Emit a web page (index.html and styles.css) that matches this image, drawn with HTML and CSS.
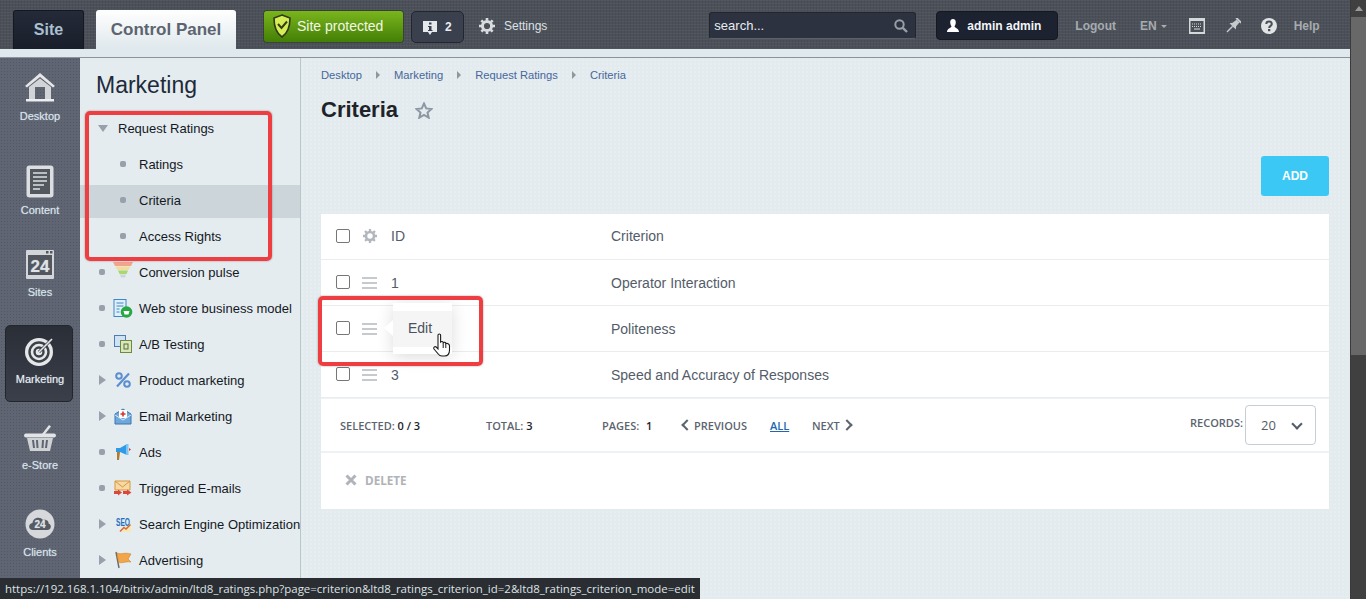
FILE: index.html
```html
<!DOCTYPE html>
<html lang="en">
<head>
    <meta charset="UTF-8">
    <title>Criteria</title>
    <link rel="stylesheet" href="styles.css">
</head>
<body>
<div class="app">
    <header class="topbar">
        <a class="tab tab-site">Site</a>
        <a class="tab tab-panel">Control Panel</a>
        <a class="protected">
            <svg width="20" height="24" viewBox="0 0 20 24"><path d="M10 1 L18 4 C18 13 16 19 10 23 C4 19 2 13 2 4 Z" fill="#d6ee55" stroke="#2f3a18" stroke-width="1.6"/><path d="M6 10 L9.5 14 L15 7.5" fill="none" stroke="#33401a" stroke-width="2"/></svg>
            <span>Site protected</span>
        </a>
        <a class="notify">
            <svg width="14" height="15" viewBox="0 0 14 15"><path d="M0 1 H14 V12 H9 L7 15 L5 12 H0 Z" fill="#e6e9ec"/><rect x="6" y="2.500" width="2.500" height="2" fill="#3a404d"/><path d="M5 6 H8.500 V10 H9.500 V11 H5 V10 H6 V7 H5 Z" fill="#3a404d"/></svg>
            <b>2</b>
        </a>
        <a class="settings">
            <svg width="16" height="16" viewBox="0 0 16 16"><circle cx="8" cy="8" r="4.600" fill="none" stroke="#d9dcdf" stroke-width="3"/><path d="M8 0 V16 M0 8 H16 M2.300 2.300 L13.700 13.700 M13.700 2.300 L2.300 13.700" stroke="#d9dcdf" stroke-width="2.600" stroke-dasharray="2.600 10.800 2.600"/></svg>
            <span>Settings</span>
        </a>
        <div class="search">
            <span>search...</span>
            <svg width="14" height="14" viewBox="0 0 14 14"><circle cx="5.500" cy="5.500" r="4.200" fill="none" stroke="#9a9fa6" stroke-width="2"/><path d="M8.800 8.800 L13 13" stroke="#9a9fa6" stroke-width="2.400"/></svg>
        </div>
        <a class="user">
            <svg width="12" height="13" viewBox="0 0 12 13"><path d="M6 0 C8 0 8.800 1.500 8.800 3.500 C8.800 5.500 7.800 6.800 7.500 7.500 C8 9 12 9.500 12 13 H0 C0 9.500 4 9 4.500 7.500 C4.200 6.800 3.200 5.500 3.200 3.500 C3.200 1.500 4 0 6 0 Z" fill="#fff"/></svg>
            <span>admin admin</span>
        </a>
        <a class="top-link logout">Logout</a>
        <a class="top-link lang">EN<i class="lang-arrow"></i></a>
        <svg class="keyboard" width="16" height="16" viewBox="0 0 16 16"><rect width="16" height="16" fill="#d5d8db"/><rect x="1.500" y="3" width="13" height="11" fill="#4b5058"/><path d="M3 6 H13 M3 8.500 H13" stroke="#d5d8db" stroke-dasharray="1 1"/><path d="M5 11 H11" stroke="#d5d8db"/></svg>
        <svg class="pin" width="16" height="16" viewBox="0 0 16 16"><g transform="rotate(45 8 8)" fill="#c6cacd"><rect x="4.500" y="-1" width="7" height="2"/><path d="M6 1 H10 L10.500 6 L12.500 8.500 H3.500 L5.500 6 Z"/><rect x="7.300" y="8.500" width="1.400" height="8"/></g></svg>
        <svg class="help-icon" width="16" height="16" viewBox="0 0 16 16"><circle cx="8" cy="8" r="8" fill="#e2e4e6"/><path d="M5.300 6 C5.300 2.800 10.800 2.800 10.800 6 C10.800 8 8.200 7.800 8.200 10" fill="none" stroke="#4b5058" stroke-width="2"/><rect x="7" y="11" width="2.300" height="2.200" fill="#4b5058"/></svg>
        <a class="top-link help">Help</a>
    </header>
    <div class="strip"></div>

    <div class="main">
        <nav class="rail">
            <a class="rail-item rail-desktop">
                <svg width="32" height="30" viewBox="0 0 32 30"><path d="M16 1 L31 14 L29 15.500 L16 5 L3 15.500 L1 14 Z" fill="#e4e6e8"/><path d="M5 15 L16 6.500 L27 15 V27 H21 V15 H11 V27 H5 Z" fill="#d2d5d8"/><rect x="2" y="27" width="28" height="2.500" fill="#eceef0"/></svg>
                <span>Desktop</span>
            </a>
            <a class="rail-item rail-content">
                <svg width="28" height="33" viewBox="0 0 28 33"><rect x="0.500" y="0.500" width="27" height="32" rx="3" fill="#dcdfe2"/><rect x="4" y="4" width="20" height="25" fill="#53585f"/><path d="M7 8 H21 M7 12 H21 M7 16 H21 M7 20 H18 M7 24 H14" stroke="#dcdfe2" stroke-width="1.600"/></svg>
                <span>Content</span>
            </a>
            <a class="rail-item rail-sites">
                <svg width="28" height="29" viewBox="0 0 28 29"><rect width="28" height="29" rx="1" fill="#d3d6d9"/><rect x="2" y="5" width="24" height="20" fill="#52575f"/><rect x="20" y="1" width="2.500" height="2.500" fill="#52575f"/><rect x="24" y="1" width="2.500" height="2.500" fill="#52575f"/><text x="14" y="22" text-anchor="middle" class="rail-num">24</text></svg>
                <span>Sites</span>
            </a>
            <a class="rail-item rail-active">
                <svg width="30" height="30" viewBox="0 0 30 30"><circle cx="14" cy="16" r="14" fill="#e6e7e9"/><circle cx="14" cy="16" r="9.500" fill="none" stroke="#3c4047" stroke-width="2.400"/><circle cx="14" cy="16" r="4.500" fill="none" stroke="#3c4047" stroke-width="2.400"/><path d="M14 16 L26 4" stroke="#3c4047" stroke-width="3"/><path d="M14 16 L27 3" stroke="#e6e7e9" stroke-width="1.600"/></svg>
                <span>Marketing</span>
            </a>
            <a class="rail-item rail-store">
                <svg width="32" height="28" viewBox="0 0 32 28"><path d="M18 10 L25 1 L27 2.500 L21 10 Z" fill="#e2e4e6"/><rect y="9.500" width="32" height="4" rx="2" fill="#e2e4e6"/><path d="M3 14 H29 L26 27 H6 Z" fill="#cfd2d5"/><path d="M9 16 L10 24 M13 16 L13.500 24 M18.500 24 L19 16 M22 24 L23 16" stroke="#5f6572" stroke-width="2"/></svg>
                <span>e-Store</span>
            </a>
            <a class="rail-item rail-clients">
                <svg width="30" height="30" viewBox="0 0 30 30"><circle cx="15" cy="15" r="14.500" fill="#d6d8db"/><path d="M8 21 C3 21 3 14.500 7.500 14 C8 8.500 15 7 18 11 C22 10 24 13 23.500 14.500 C27 15.500 26.500 21 22 21 Z" fill="#555a63"/><text x="15" y="19" text-anchor="middle" class="rail-cloud">24</text></svg>
                <span>Clients</span>
            </a>
        </nav>

        <aside class="menu">
            <h2 class="menu-title">Marketing</h2>
            <ul class="menu-list">
                <li class="menu-row"><i class="arrow-down"></i><span class="menu-parent">Request Ratings</span></li>
                <li class="menu-row menu-sub"><i class="dot"></i><span>Ratings</span></li>
                <li class="menu-row menu-sub menu-current"><i class="dot"></i><span>Criteria</span></li>
                <li class="menu-row menu-sub"><i class="dot"></i><span>Access Rights</span></li>
                <li class="menu-row">
                    <i class="dot"></i>
                    <svg class="menu-icon menu-icon-up" width="20" height="16" viewBox="0 0 20 16"><path d="M0 0 H20 L18 4 H2 Z" fill="#f0a58e"/><path d="M2.500 4.500 H17.500 L15.500 8 H4.500 Z" fill="#f5dc9a"/><path d="M5 8.500 H15 L13.500 12 H6.500 Z" fill="#a8d86f"/><path d="M7 12.500 H13 L12 15.500 H8 Z" fill="#cfd4d8"/></svg>
                    <span>Conversion pulse</span>
                </li>
                <li class="menu-row">
                    <i class="dot"></i>
                    <svg class="menu-icon" width="19" height="19" viewBox="0 0 19 19"><rect x="0.500" y="0.500" width="12" height="17" fill="#dff0fb" stroke="#3e86c4"/><path d="M3 4 H10 M3 7 H10 M3 10 H6 M3 13 H6" stroke="#3e86c4"/><circle cx="13" cy="13" r="5.800" fill="#28a745"/><path d="M10 12 H16 L15 15.500 H11 Z" fill="#fff"/></svg>
                    <span>Web store business model</span>
                </li>
                <li class="menu-row">
                    <i class="dot"></i>
                    <svg class="menu-icon" width="18" height="18" viewBox="0 0 18 18"><rect x="0.500" y="0.500" width="11" height="11" fill="#cfe3f5" stroke="#4a7fb5"/><rect x="6.500" y="5.500" width="11" height="12" fill="#dbe6c0" stroke="#6c8c3a"/><rect x="10" y="9" width="4" height="5" fill="none" stroke="#53702a"/></svg>
                    <span>A/B Testing</span>
                </li>
                <li class="menu-row">
                    <i class="arrow-right"></i>
                    <svg class="menu-icon" width="16" height="16" viewBox="0 0 16 16"><circle cx="4" cy="4" r="2.800" fill="none" stroke="#5b8fd0" stroke-width="2"/><circle cx="12" cy="12" r="2.800" fill="none" stroke="#5b8fd0" stroke-width="2"/><path d="M2 14.500 L14 1.500" stroke="#5b8fd0" stroke-width="2.200"/></svg>
                    <span>Product marketing</span>
                </li>
                <li class="menu-row">
                    <i class="arrow-right"></i>
                    <svg class="menu-icon" width="16" height="17" viewBox="0 0 16 17"><path d="M0 6 L8 1 L16 6 V16 H0 Z" fill="#6fa8dc" stroke="#3a76b0"/><rect x="4" y="2" width="8" height="8" fill="#fff"/><path d="M8 3.500 V8.500 M5.500 6 H10.500" stroke="#d9342b" stroke-width="1.600"/><path d="M0 7 L8 12 L16 7" fill="none" stroke="#d7e8f7"/></svg>
                    <span>Email Marketing</span>
                </li>
                <li class="menu-row">
                    <i class="dot"></i>
                    <svg class="menu-icon" width="16" height="18" viewBox="0 0 16 18"><path d="M1 5 H5 L12 1 V12 L5 9 H1 Z" fill="#2f9be8"/><rect x="11" y="1" width="2.500" height="11" fill="#7cc4f5"/><path d="M14 5 L16 6.500 L14 8 Z" fill="#d93a2b"/><path d="M2 9 H5 L4 17 H2 Z" fill="#b07b2c"/></svg>
                    <span>Ads</span>
                </li>
                <li class="menu-row">
                    <i class="dot"></i>
                    <svg class="menu-icon" width="18" height="16" viewBox="0 0 18 16"><path d="M1 1 H16 V10 H1 Z" fill="#f6d9a4" stroke="#d8973d"/><path d="M1 1 L8.500 7 L16 1" fill="none" stroke="#d8973d"/><path d="M0 11 H4 V9.500 L8 12.500 L4 15.500 V14 H0 Z M9 11 H13 V9.500 L17.500 12.500 L13 15.500 V14 H9 Z" fill="#d9483b"/></svg>
                    <span>Triggered E-mails</span>
                </li>
                <li class="menu-row">
                    <i class="arrow-right"></i>
                    <svg class="menu-icon" width="16" height="16" viewBox="0 0 16 16"><path d="M6 16 L16 8 V16 Z" fill="#f7e7b5"/><text x="1" y="10" class="seo-text" textLength="14" lengthAdjust="spacingAndGlyphs">SEO</text><path d="M5 15.500 L9 11.500 L11 13 L15.500 8.500" fill="none" stroke="#e0662c" stroke-width="1.500"/></svg>
                    <span>Search Engine Optimization</span>
                </li>
                <li class="menu-row">
                    <i class="arrow-right"></i>
                    <svg class="menu-icon" width="18" height="18" viewBox="0 0 18 18"><path d="M2 1 L5 17" stroke="#6f6a5e" stroke-width="1.400"/><path d="M3 2 C7 4 10 1 17 3 L14 8 L17 11 C11 10 8 13 4.500 11 Z" fill="#f2a54a" stroke="#cf8127" stroke-width="0.600"/></svg>
                    <span>Advertising</span>
                </li>
            </ul>
        </aside>

        <main class="content">
            <div class="crumbs">
                <a>Desktop</a><i class="crumb-arrow"></i>
                <a>Marketing</a><i class="crumb-arrow"></i>
                <a>Request Ratings</a><i class="crumb-arrow"></i>
                <a>Criteria</a>
            </div>
            <div class="title-row">
                <h1>Criteria</h1>
                <svg width="18" height="17" viewBox="0 0 18 17"><path d="M9 1.500 L11.200 6.400 L16.500 7 L12.500 10.500 L13.700 15.700 L9 13 L4.300 15.700 L5.500 10.500 L1.500 7 L6.800 6.400 Z" fill="none" stroke="#8d97a3" stroke-width="2"/></svg>
            </div>
            <div class="toolbar"><a class="add-btn">ADD</a></div>

            <section class="grid-card">
                <div class="grid-row grid-head">
                    <span class="check"></span>
                    <svg class="row-ico" width="14" height="14" viewBox="0 0 16 16"><circle cx="8" cy="8" r="4.600" fill="none" stroke="#b2b7bd" stroke-width="3"/><path d="M8 0 V16 M0 8 H16 M2.300 2.300 L13.700 13.700 M13.700 2.300 L2.300 13.700" stroke="#b2b7bd" stroke-width="2.600" stroke-dasharray="2.600 10.800 2.600"/></svg>
                    <span class="col-id">ID</span>
                    <span>Criterion</span>
                </div>
                <div class="grid-row">
                    <span class="check"></span>
                    <i class="burger"></i>
                    <span class="col-id">1</span>
                    <span>Operator Interaction</span>
                </div>
                <div class="grid-row">
                    <span class="check"></span>
                    <i class="burger"></i>
                    <span class="col-id">2</span>
                    <span>Politeness</span>
                    <div class="popup">
                        <div class="popup-item">Edit</div>
                    </div>
                </div>
                <div class="grid-row">
                    <span class="check"></span>
                    <i class="burger"></i>
                    <span class="col-id">3</span>
                    <span>Speed and Accuracy of Responses</span>
                </div>

                <div class="grid-nav">
                    <span class="nav-selected">SELECTED: <b>0 / 3</b></span>
                    <span class="nav-total">TOTAL: <b>3</b></span>
                    <span class="nav-pages">PAGES: <b>1</b></span>
                    <span class="nav-prev"><i class="chev chev-left"></i>PREVIOUS</span>
                    <a class="nav-all">ALL</a>
                    <span class="nav-next">NEXT<i class="chev chev-right"></i></span>
                    <span class="nav-records">RECORDS:</span>
                    <div class="records-select"><span>20</span><i class="chev-down"></i></div>
                </div>

                <div class="grid-actions">
                    <svg width="12" height="12" viewBox="0 0 12 12"><path d="M1.500 1.500 L10.500 10.500 M10.500 1.500 L1.500 10.500" stroke="#b0b3b8" stroke-width="3"/></svg>
                    <span>DELETE</span>
                </div>
            </section>
        </main>
    </div>
</div>
<div class="scrollbar"><div class="scroll-up"></div><div class="scroll-thumb"></div></div>

<div class="mark mark-menu"></div>
<div class="mark mark-row"></div>
<svg class="hand" width="18" height="24" viewBox="0 0 18 24"><path d="M5 2 C5 0.600 7.600 0.600 7.600 2 V9 C8.600 8.200 10 8.400 10.200 9.600 C11.200 9 12.600 9.300 12.800 10.600 C14 10 16.500 10.500 16.500 13 V17 C16.500 20.500 15 23 11.500 23 H9 C7 23 5.800 22 4.800 20.500 L1 16 C0 14.500 1.800 13 3.200 14 L5 15.800 Z" fill="#fff" stroke="#1c1c1c" stroke-width="1.100"/><path d="M10.200 10 V15 M12.800 11 V15" stroke="#1c1c1c"/></svg>
<div class="statusbar">https://192.168.1.104/bitrix/admin/ltd8_ratings.php?page=criterion&amp;ltd8_ratings_criterion_id=2&amp;ltd8_ratings_criterion_mode=edit</div>
</body>
</html>
```

FILE: styles.css
```css
html, body {
    height: 100%;
    margin: 0;
    overflow: hidden;
}

body {
    font-family: "Liberation Sans", Arial, sans-serif;
    display: flex;
    background-color: #e3ebee;
}

a {
    cursor: pointer;
}

ul {
    list-style: none;
    margin: 0;
    padding: 0;
}

.app {
    flex: 1;
    min-width: 0;
    display: flex;
    flex-direction: column;
    height: 599px;
}

/* top bar */
.topbar {
    height: 49px;
    flex: none;
    display: flex;
    align-items: flex-start;
    box-sizing: border-box;
    padding-left: 13px;
    background-color: #4b5059;
    background-image:
        repeating-linear-gradient(0deg, rgba(255, 255, 255, 0.04) 0 1px, transparent 1px 3px),
        repeating-linear-gradient(90deg, rgba(0, 0, 0, 0.06) 0 1px, transparent 1px 3px);
}

.tab {
    margin-top: 10px;
    height: 39px;
    display: flex;
    align-items: center;
    justify-content: center;
    font-weight: bold;
    font-size: 16px;
    border-radius: 3px 3px 0 0;
    box-sizing: border-box;
}

.tab-site {
    width: 71px;
    color: #a9c0d2;
    background: linear-gradient(#252a38, #191e2b);
    border: 1px solid #15181f;
    border-bottom: none;
}

.tab-panel {
    width: 140px;
    margin-left: 12px;
    font-size: 17px;
    color: #5c6470;
    background: linear-gradient(#ffffff, #dfe8ec);
}

.protected {
    margin: 11px 0 0 28px;
    width: 139px;
    height: 31px;
    box-sizing: border-box;
    padding: 0 0 2px 8px;
    display: flex;
    align-items: center;
    gap: 5px;
    color: #f2f7e6;
    font-size: 14px;
    border-radius: 3px;
    background: linear-gradient(#7ab51d, #437f05);
    box-shadow: 0 0 0 1px rgba(40, 50, 20, 0.5);
}

.notify {
    margin: 11px 0 0 8px;
    width: 53px;
    height: 32px;
    box-sizing: border-box;
    padding-left: 11px;
    display: flex;
    align-items: center;
    gap: 8px;
    color: #e8ecf0;
    font-size: 12px;
    background: #3a404e;
    border: 1px solid #23262d;
    border-radius: 5px;
}

.settings {
    margin: 18px 0 0 15px;
    display: flex;
    align-items: center;
    gap: 9px;
    color: #dde1e4;
    font-size: 12px;
    height: 16px;
}

.search {
    margin: 12px 0 0 162px;
    width: 207px;
    height: 27px;
    box-sizing: border-box;
    padding: 0 7px 0 4px;
    display: flex;
    align-items: center;
    justify-content: space-between;
    color: #e8ecf0;
    font-size: 13px;
    background: #2c3240;
    border: 1px solid #23262d;
    border-bottom-color: #5c6068;
    border-radius: 3px;
}

.user {
    margin: 11px 0 0 20px;
    width: 122px;
    height: 29px;
    box-sizing: border-box;
    padding-left: 10px;
    display: flex;
    align-items: center;
    gap: 8px;
    color: #f2f5f8;
    font-size: 12px;
    font-weight: bold;
    background: #1c2230;
    border: 1px solid #15181f;
    border-radius: 4px;
}

.top-link {
    margin-top: 19px;
    color: #a6abb0;
    font-size: 12px;
    font-weight: bold;
}

.logout {
    margin-left: 17px;
}

.lang {
    margin-left: 24px;
    display: flex;
    align-items: center;
    gap: 4px;
}

.lang-arrow {
    border: 3px solid transparent;
    border-top-color: #a6abb0;
    border-bottom: none;
}

.keyboard {
    margin: 18px 0 0 22px;
}

.pin {
    margin: 18px 0 0 20px;
}

.help-icon {
    margin: 18px 0 0 20px;
}

.help {
    margin-left: 17px;
}

.strip {
    height: 8px;
    flex: none;
    background: #e0e9ed;
    border-bottom: 1px solid #8d9399;
}

.main {
    flex: 1;
    min-height: 0;
    display: flex;
}

/* left rail */
.rail {
    width: 80px;
    flex: none;
    background-color: #5f6572;
    background-image: radial-gradient(rgba(0, 0, 0, 0.14) 1px, transparent 1px);
    background-size: 3px 3px;
    display: flex;
    flex-direction: column;
    align-items: center;
}

.rail-item {
    display: flex;
    flex-direction: column;
    align-items: center;
    color: #d8e4ec;
    font-size: 11px;
    text-shadow: 0 0 1px rgba(216, 228, 236, 0.6);
}

.rail-item span {
    line-height: 13px;
}

.rail-desktop {
    margin-top: 14px;
    gap: 8px;
}

.rail-content {
    margin-top: 42px;
    gap: 6px;
}

.rail-sites {
    margin-top: 33px;
    gap: 7px;
}

.rail-active {
    margin: 26px 0 0 -2px;
    width: 68px;
    height: 77px;
    box-sizing: border-box;
    padding: 10px 0 0 2px;
    gap: 7px;
    color: #e6eef4;
    background: linear-gradient(#2a2e37, #3a3f4a);
    border: 1px solid #23262d;
    border-radius: 5px;
}

.rail-store {
    margin-top: 22px;
    gap: 7px;
}

.rail-clients {
    margin-top: 37px;
    gap: 7px;
}

.rail-num {
    font: bold 17px "Liberation Sans", sans-serif;
    fill: #dfe2e5;
}

.rail-cloud {
    font: bold 10px "Liberation Sans", sans-serif;
    fill: #dfe2e5;
}

/* section menu */
.menu {
    width: 221px;
    flex: none;
    box-sizing: border-box;
    overflow: hidden;
    border-right: 1px solid #b9c6cd;
    background: #e4ecef;
}

.menu-title {
    margin: 0;
    padding: 13px 0 0 16px;
    height: 52px;
    box-sizing: border-box;
    font-size: 23px;
    font-weight: normal;
    line-height: 28px;
    color: #1e2a3a;
}

.menu-row {
    height: 36px;
    display: flex;
    align-items: center;
    padding-left: 19px;
    font-size: 13px;
    color: #14181f;
    white-space: nowrap;
}

.menu-parent {
    margin-left: 10px;
}

.menu-sub {
    padding-left: 40px;
}

.menu-sub .dot {
    margin-right: 13px;
}

.menu-current {
    height: 33px;
    margin-top: 3px;
    padding-bottom: 3px;
    box-sizing: border-box;
    background: #ccd6da;
}

.dot {
    width: 6px;
    height: 6px;
    flex: none;
    margin-right: 8px;
    border-radius: 2px;
    background: #98a1ab;
}

.arrow-down {
    width: 0;
    height: 0;
    flex: none;
    margin-left: -1px;
    border: 5px solid transparent;
    border-top: 7px solid #98a1ab;
    border-bottom: none;
}

.arrow-right {
    width: 0;
    height: 0;
    flex: none;
    margin-right: 7px;
    border: 5px solid transparent;
    border-left: 7px solid #98a1ab;
    border-right: none;
}

.menu-icon {
    flex: none;
    width: 20px;
    margin-right: 6px;
    overflow: visible;
}

.menu-icon-up {
    margin-top: -4px;
}

.seo-text {
    font: bold 10px "Liberation Sans", sans-serif;
    fill: #1f6fc0;
}

/* content */
.content {
    flex: 1;
    min-width: 0;
    box-sizing: border-box;
    padding: 0 21px 0 20px;
    background-color: #e3ebee;
    background-image: radial-gradient(rgba(255, 255, 255, 0.14) 1px, transparent 1px);
    background-size: 4px 4px;
}

.crumbs {
    display: flex;
    align-items: center;
    padding-top: 10px;
    height: 14px;
    font-size: 11.200px;
    color: #46679c;
}

.crumb-arrow {
    margin: 0 14px;
    border: 4px solid transparent;
    border-left: 4px solid #8e979e;
    border-right: none;
}

.title-row {
    margin-top: 14px;
    display: flex;
    align-items: center;
    gap: 17px;
}

.title-row h1 {
    margin: 0;
    font-size: 22px;
    line-height: 28px;
    color: #1e2329;
}

.toolbar {
    margin-top: 32px;
    display: flex;
    justify-content: flex-end;
}

.add-btn {
    width: 68px;
    height: 40px;
    display: flex;
    align-items: center;
    justify-content: center;
    font-size: 12px;
    font-weight: bold;
    color: #fff;
    background: #3bc8f5;
    border-radius: 3px;
}

.grid-card {
    margin-top: 18px;
    background: #fff;
}

.grid-row {
    position: relative;
    height: 45px;
    display: flex;
    align-items: center;
    padding-left: 15px;
    font-size: 14px;
    color: #535c69;
    border-bottom: 1px solid #e9edf0;
}

.grid-head {
    height: 44px;
    padding-bottom: 1px;
}

.check {
    width: 12px;
    height: 12px;
    flex: none;
    margin-top: -2px;
    border: 1px solid #767676;
    border-radius: 2px;
    background: #fff;
}

.grid-head .check {
    margin-top: 0;
}

.row-ico {
    margin-left: 13px;
    flex: none;
}

.burger {
    margin-left: 12px;
    width: 15px;
    height: 2px;
    flex: none;
    background: #c6cacf;
    box-shadow: 0 -5px 0 #c6cacf, 0 5px 0 #c6cacf;
}

.col-id {
    width: 220px;
    margin-left: 14px;
    flex: none;
}

.popup {
    position: absolute;
    left: 72px;
    top: -3px;
    width: 59px;
    height: 51px;
    box-sizing: border-box;
    padding-top: 8px;
    background: #fff;
    box-shadow: 0 3px 16px rgba(0, 0, 0, 0.14);
}

.popup::before {
    content: "";
    position: absolute;
    left: -9px;
    top: 17px;
    border: 8px solid transparent;
    border-right: 9px solid #fff;
    border-left: none;
}

.popup-item {
    height: 36px;
    display: flex;
    align-items: center;
    padding: 0 0 2px 15px;
    box-sizing: border-box;
    background: #f5f5f5;
    font-size: 14px;
    color: #4a5160;
}

.grid-nav {
    height: 52px;
    display: flex;
    align-items: center;
    font-family: "Open Sans", sans-serif;
    font-size: 11px;
    font-weight: 600;
    color: #5c6470;
    border-top: 1px solid #eef2f5;
    border-bottom: 2px solid #eef2f5;
}

.grid-nav b {
    font-weight: 600;
    color: #1e2329;
}

.nav-selected {
    margin-left: 19px;
    width: 146px;
}

.nav-total {
    width: 116px;
}

.nav-pages {
    width: 79px;
}

.nav-pages b {
    margin-left: 4px;
}

.nav-prev {
    display: flex;
    align-items: center;
    gap: 3px;
    width: 89px;
}

.nav-all {
    width: 42px;
    color: #2067b0;
    text-decoration: underline;
}

.nav-next {
    display: flex;
    align-items: center;
    gap: 3px;
}

.chev {
    width: 6px;
    height: 6px;
    display: block;
    border-left: 2px solid #5c6470;
    border-bottom: 2px solid #5c6470;
}

.chev-left {
    margin-left: 2px;
    transform: rotate(45deg);
}

.chev-right {
    transform: rotate(-135deg);
}

.nav-records {
    margin-left: auto;
    margin-right: 2px;
    margin-top: -6px;
}

.records-select {
    width: 71px;
    height: 40px;
    margin-right: 13px;
    box-sizing: border-box;
    padding: 0 14px 0 15px;
    display: flex;
    align-items: center;
    justify-content: space-between;
    font-size: 13px;
    font-weight: normal;
    color: #535c69;
    border: 1px solid #c6cdd3;
    border-radius: 4px;
}

.chev-down {
    width: 6px;
    height: 6px;
    margin-top: -3px;
    border-right: 2px solid #535c69;
    border-bottom: 2px solid #535c69;
    transform: rotate(45deg);
}

.grid-actions {
    height: 54px;
    display: flex;
    align-items: center;
    gap: 8px;
    padding: 0 0 2px 24px;
    font-family: "Open Sans", sans-serif;
    font-size: 11.700px;
    font-weight: 700;
    color: #b0b3b8;
}

/* browser scrollbar */
.scrollbar {
    width: 16px;
    flex: none;
    height: 599px;
    background: #404040;
    border-left: 1px solid #3a3a3a;
    box-sizing: border-box;
}

.scroll-up {
    height: 17px;
    position: relative;
}

.scroll-up::before {
    content: "";
    position: absolute;
    left: 4px;
    top: 6px;
    border: 4px solid transparent;
    border-bottom: 5px solid #9a9a9a;
    border-top: none;
}

.scroll-thumb {
    height: 338px;
    background: #686868;
}

/* annotations and overlays on the screenshot */
.mark {
    position: absolute;
    box-sizing: border-box;
    border: 4px solid #ef3e42;
    border-radius: 5px;
    box-shadow: 0 0 2px rgba(0, 0, 0, 0.4);
}

.mark-menu {
    left: 85px;
    top: 111px;
    width: 187px;
    height: 150px;
}

.mark-row {
    left: 318px;
    top: 296px;
    width: 165px;
    height: 70px;
}

.hand {
    position: absolute;
    left: 433px;
    top: 333px;
}

.statusbar {
    position: absolute;
    left: 0;
    bottom: 0;
    width: 700px;
    height: 21px;
    box-sizing: border-box;
    padding: 3px 0 0 5px;
    font-family: "Open Sans", sans-serif;
    font-size: 11.470px;
    line-height: 15px;
    white-space: nowrap;
    overflow: hidden;
    color: #dde2e6;
    background: #2a2d31;
}
```
